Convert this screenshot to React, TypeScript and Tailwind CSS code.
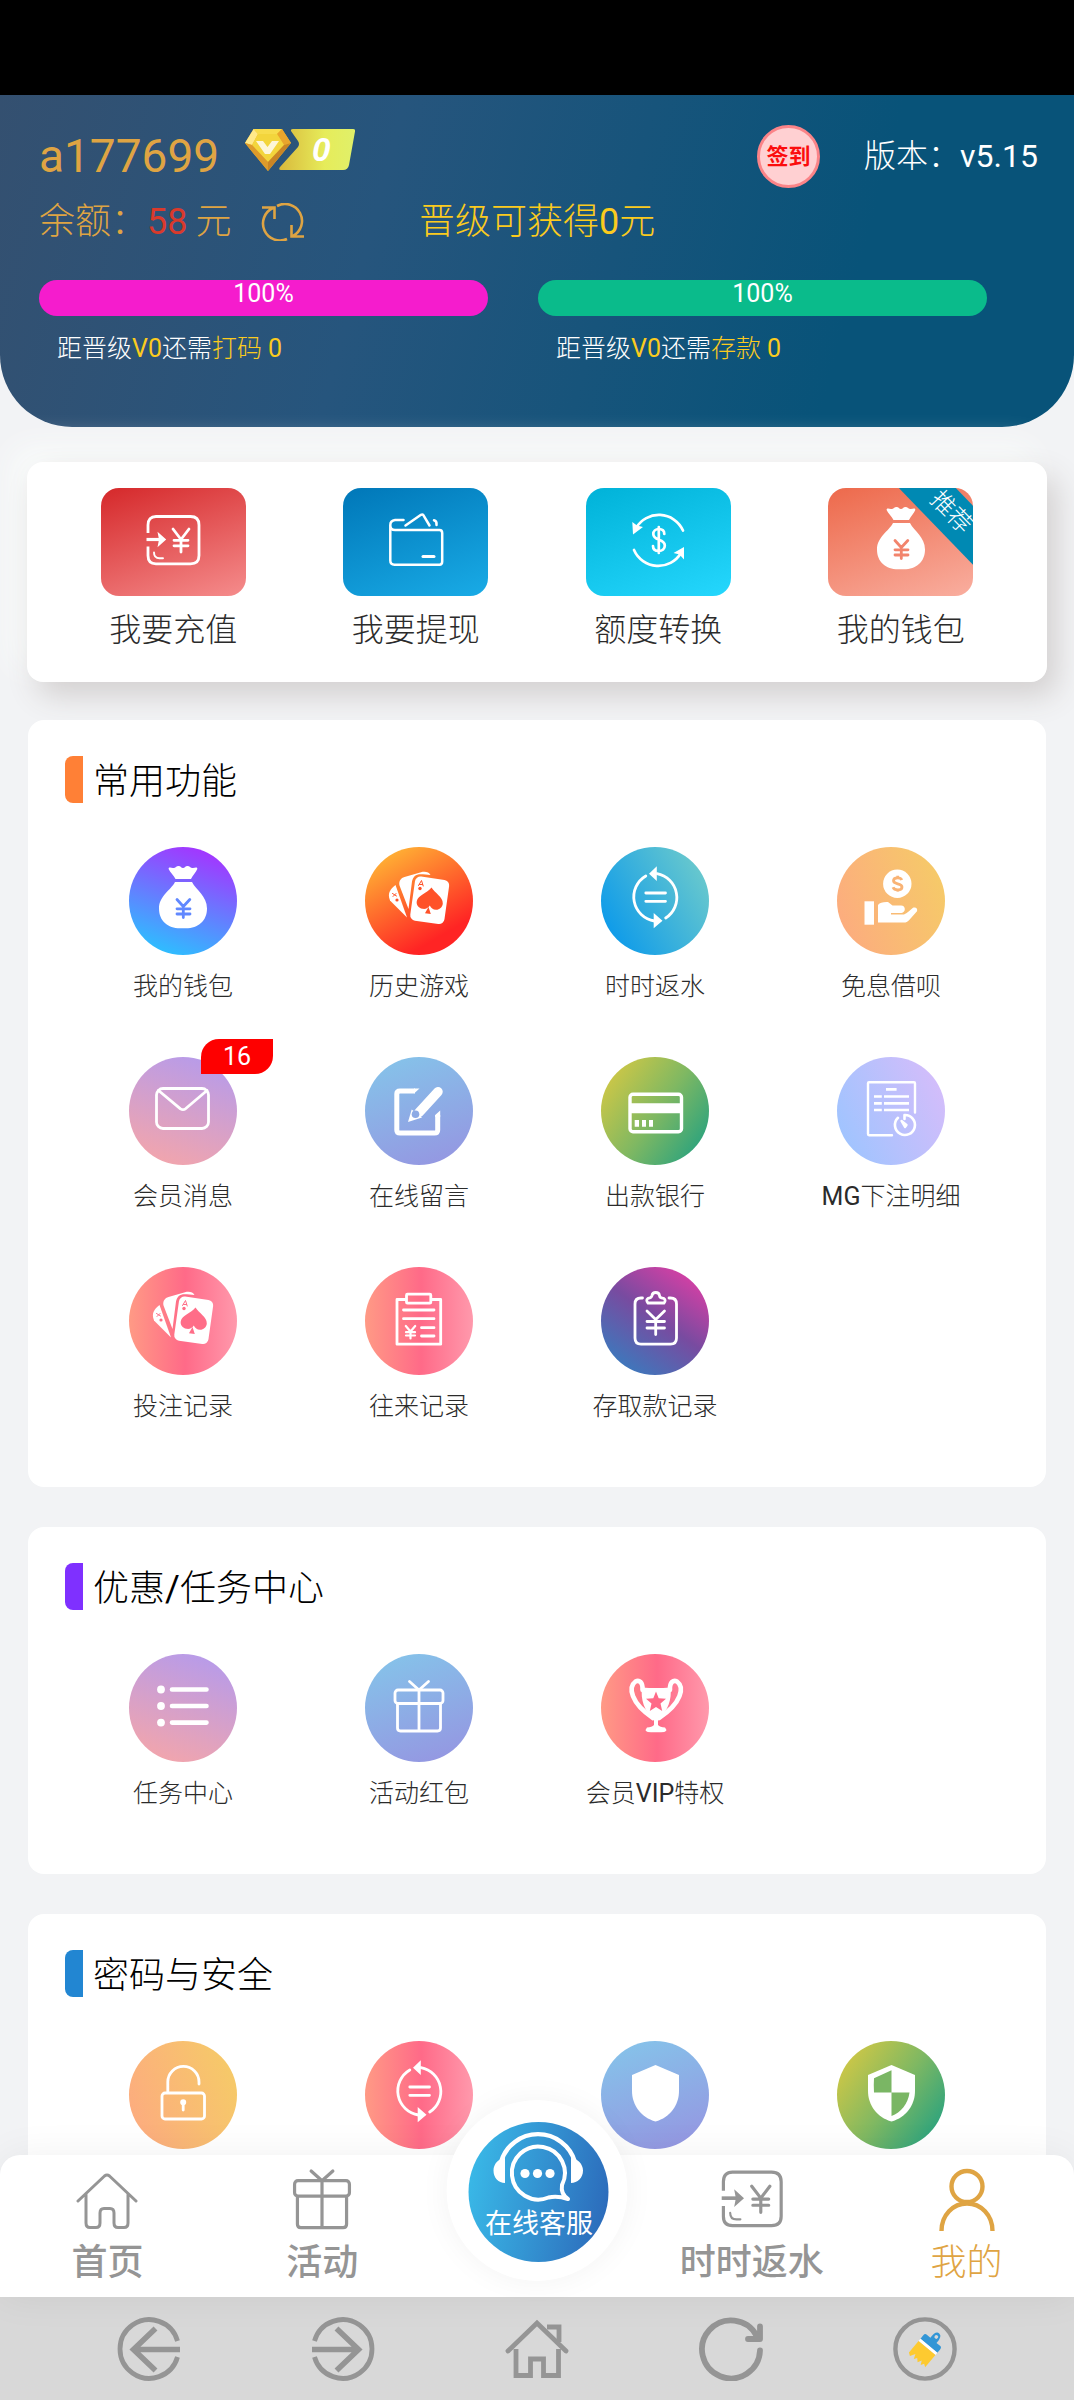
import type { ReactNode } from 'react';

const FONT = "font-['Roboto','Noto_Sans_CJK_SC',sans-serif]";

const PINK = 'bg-[linear-gradient(90deg,#ff9a85,#ff6a88_52%,#ff99ac)]';
const SKY = 'bg-[linear-gradient(160deg,#84c6ea,#9693e1)]';
const LILAC = 'bg-[linear-gradient(200deg,#b19af0,#f8a6a6)]';
const PEACH = 'bg-[linear-gradient(70deg,#fda981,#f5cd66)]';
const GREEN = 'bg-[linear-gradient(125deg,#e2cb3f,#7fb862_52%,#159d85)]';

/* Chinese is set light, latin letters and digits in regular */
function Mixed({ text }: { text: string }) {
  return (
    <>
      {text.split(/([A-Za-z0-9./]+)/).map((part, i) =>
        i % 2 ? (
          <span key={i} className="font-normal">
            {part}
          </span>
        ) : (
          part
        )
      )}
    </>
  );
}

function Glyph({ children, box = '0 0 108 108', className = 'size-[108px]', width = 2.8 }: { children: ReactNode; box?: string; className?: string; width?: number }) {
  return (
    <svg viewBox={box} className={className} fill="none" stroke="currentColor" strokeWidth={width} strokeLinecap="round" strokeLinejoin="round" aria-hidden="true">
      {children}
    </svg>
  );
}

function BagIcon({ ink }: { ink: string }) {
  return (
    <Glyph>
      <g fill="currentColor" stroke="none">
        <path d="M39.6 22C39.5 19.5 42 20.5 44 21C46.5 21.5 47 19 49.5 19C52 19 52 21 54 21C56 21 56 19 58.5 19C61 19 61.5 21.5 64 21C66 20.5 68.5 19.5 68.3 22C67 25.5 63.5 28.5 62 32H46.5C45 28.5 41 25.5 39.6 22Z" />
        <path d="M46 35H63C67 43 78 49 78 61.500C78 74 69 81.300 57 81.300H51C39 81.300 30 74 30 61.500C30 49 42 43 46 35Z" />
      </g>
      <path stroke={ink} d="M48 52.500L54.300 59.500L60.800 52.500M54.300 59.500V70.500M48 61.800H61M48 67H61" />
    </Glyph>
  );
}

function CardsIcon({ ink }: { ink: string }) {
  return (
    <Glyph>
      <g fill="currentColor" stroke="none">
        <path d="M30.500 38L42 70.500L25 53.500C22 46 25.500 42 30.500 38Z" />
        <path d="M34.500 38.500C33.500 34 36 31 39.500 30L56 25.300C60 24.300 64 25 65.500 28L58 27.300C51.500 26.500 48 29 47 34.500L43.500 62Z" />
        <rect x="47.500" y="31" width="34.500" height="44.500" rx="5.500" transform="rotate(8 64.500 53)" />
      </g>
      <g fill={ink} stroke="none">
        <path d="M66.500 40.500C70 46.500 78 49.500 77.800 56.500C77.500 60.500 74 63 71 62.800C68 62.600 66 61 64.800 58.500C63.200 61.200 60.500 62.300 57.500 61.800C53.500 61 51 58 51.800 54C53 48 62 46.500 66.500 40.500Z" />
        <path d="M63.500 60L65.800 67L60 66.200Z" />
        <circle cx="55" cy="41.500" r="1.700" />
        <circle cx="32" cy="53" r="1.600" />
      </g>
      <path stroke={ink} strokeWidth="1" d="M53.500 38.500L56.500 33.500L58.200 39M54.500 37.500H57.500M27.500 46.500L31.500 49M28 49.500L31 46.500" />
    </Glyph>
  );
}

function RefundIcon() {
  return (
    <Glyph>
      <path d="M44.800 29A24.300 24.300 0 0 0 53.500 74M64.700 71A24.300 24.300 0 0 0 56 26.700M44.800 46H64.500M44.800 54.300H64.500" />
      <path fill="currentColor" stroke="none" d="M55.800 19.300V34L48 26.700ZM52.700 66V81.300L61.500 73.700Z" />
    </Glyph>
  );
}

function LoanIcon() {
  return (
    <Glyph>
      <g fill="currentColor" stroke="none">
        <circle cx="60.300" cy="36.700" r="14.200" />
        <path d="M27.500 54.300H37V77.700H27.500Z" />
        <path d="M41 75.500V58C43 55.500 46 54.800 51 55L55.500 58.500H64C69 58.500 69 65.500 64.500 66H54V67.600H67C70 66.500 73.500 62.500 76 60.800C78.500 59.500 81 61.500 80 64.200L72 73.200C70.500 75 69 75.500 67 75.500Z" />
      </g>
      <path stroke="#f9b375" strokeWidth="2.800" strokeLinecap="butt" d="M64.800 33C64 31 62.500 30.800 60.500 30.800C58 30.800 56.500 32 56.500 33.800C56.500 37.800 65 35.800 65 40C65 42 63.500 43 60.800 43C58.500 43 56.800 42.300 56 40.300M60.700 28.800V31M60.700 42.500V44.800" />
    </Glyph>
  );
}

function MailIcon() {
  return (
    <Glyph>
      <rect x="27.500" y="31.500" width="52" height="40" rx="6.500" />
      <path d="M29.500 33.500L51.500 51.800Q54 53.500 56.500 51.800L78 33.500" />
    </Glyph>
  );
}

function EditIcon() {
  return (
    <Glyph>
      <path strokeWidth="5" strokeLinecap="butt" d="M50 34H35Q31.800 34 31.800 37V73Q31.800 76 35 76H69.500Q72.700 76 72.700 73V58" />
      <path fill="currentColor" stroke="none" d="M49 31.500H54.500L49 36.500ZM70.200 60V58L75.200 53.500V60Z" />
      <path strokeWidth="9.500" d="M54 55.500L73 34.800" />
      <path fill="currentColor" stroke="none" d="M43 65L46.700 52.500L57 60.500Z" />
      <circle cx="50.500" cy="57.200" r="3.800" fill="#8daae5" stroke="none" />
    </Glyph>
  );
}

function BankCardIcon() {
  return (
    <Glyph width={3.4}>
      <rect x="29" y="37.200" width="51.500" height="37.600" rx="3" />
      <path fill="currentColor" stroke="none" d="M29 46.300H80V56.300H29ZM33.700 63H38V69.700H33.700ZM41 63H45V69.700H41ZM48 63H52V69.700H48Z" />
    </Glyph>
  );
}

function BetDetailIcon() {
  return (
    <Glyph width={2.4}>
      <path d="M78 55.500V26.300Q78 25.300 77 25.300H32Q31 25.300 31 26.300V77Q31 78.200 32 78.200H55" />
      <g strokeWidth="2.700" strokeLinecap="butt">
        <path d="M49 32.300H59.600M37 39.500H44.800M47 39.500H72M37 46.300H44.800M47 46.300H72M37 53H44.800M47 53H72" />
      </g>
      <path strokeWidth="2.600" d="M67.500 58A10 10 0 1 1 61 60.800M67.500 58V62" />
      <path fill="currentColor" d="M64.500 64L69.500 68L68 70Z" />
    </Glyph>
  );
}

function StatementIcon() {
  return (
    <Glyph>
      <path d="M40 32.500H32V77.200H75.700V32.500H67" />
      <rect x="41.500" y="27.200" width="24.300" height="9" rx="1" />
      <path d="M38.500 43H69M38.500 51.700H69M56.500 60.700H69M56.500 69H69" />
      <path strokeWidth="2.200" d="M40.800 59L45.500 64.500L50.200 59M45.500 64.500V71.500M41 65.200H50M41 68.500H50" />
    </Glyph>
  );
}

function CashRecordIcon() {
  return (
    <Glyph>
      <path d="M41.500 31H40Q34 31 34 37V71Q34 77.200 40 77.200H69.500Q75.500 77.200 75.500 71V37Q75.500 31 69.500 31H68" />
      <path d="M47 36H63Q65.500 33 62.500 31.300Q58.500 31 58.500 28.500Q58 25.500 54.700 25.500Q51.500 25.500 51 28.500Q50.500 31 47 31.300Q44.500 33 47 36Z" />
      <path d="M46 44L54.700 52.500L63.500 44M54.700 52.500V67.500M46 54.500H63.500M46 61H63.500" />
    </Glyph>
  );
}

function ListIcon() {
  return (
    <Glyph width={4.6}>
      <path d="M43 35.500H77.500M43 52H77.500M43 68.600H77.500" />
      <g fill="currentColor" stroke="none">
        <circle cx="32" cy="35.500" r="3.900" />
        <circle cx="32" cy="52" r="3.900" />
        <circle cx="32" cy="68.600" r="3.900" />
      </g>
    </Glyph>
  );
}

function GiftIcon({ box, className }: { box?: string; className?: string }) {
  return (
    <Glyph box={box} className={className}>
      <rect x="30" y="36" width="48" height="13.500" rx="3" />
      <path d="M32.500 50V74Q32.500 77 35.500 77H72.500Q75.500 77 75.500 74V50M54 36V77M44.500 27.500L54 36L63.500 27.500" />
    </Glyph>
  );
}

function TrophyIcon() {
  return (
    <Glyph>
      <path fill="currentColor" stroke="none" d="M41 33.500Q55 34.500 69.500 33.500C71 45 67 57 57 65.500V71Q59 73 64 73.500Q68 78.300 60 78.300H50Q42 78.300 46 73.500Q51 73 53 71V65.500C43 57 39.500 45 41 33.500Z" />
      <path strokeWidth="4.600" d="M41.500 36C42 28 38 25.500 34.500 27.500C27 33 29.500 49 52 64M69 36C68.500 28 72.500 25.500 76 27.500C83.500 33 81 49 58 64" />
      <path fill="#ff6a88" stroke="none" d="M55 37.500L57.700 44.300L65 44.800L59.500 49.500L61.200 57L55 53L48.800 57L50.500 49.500L45 44.800L52.300 44.300Z" />
    </Glyph>
  );
}

function LockIcon() {
  return (
    <Glyph>
      <rect x="33" y="52" width="42.500" height="26" rx="3" />
      <path d="M38.800 51V41A15.600 15.600 0 0 1 70 41V43" />
      <circle cx="54.200" cy="61.300" r="1.600" />
      <path d="M54.200 62V69" />
    </Glyph>
  );
}

function ShieldIcon({ ink }: { ink?: string }) {
  return (
    <Glyph>
      <path fill="currentColor" stroke="none" d="M54.500 24L78 34V50C78 64 69 76.500 54.500 80.500C40 76.500 31 64 31 50V34Z" />
      {ink && <path fill={ink} stroke="none" d="M54.500 29.300V51.500H37Q36.500 44 37 37.200ZM54.500 51.500H72.500C71 63 64 71.500 54.500 75Z" />}
    </Glyph>
  );
}

function DepositIcon({ box = '18.5 0 108 108', className }: { box?: string; className?: string }) {
  return (
    <Glyph box={box} className={className}>
      <path strokeLinecap="butt" d="M47.500 45V37Q47.500 28.500 55.500 28.500H90Q98.500 28.500 98.500 37V67.500Q98.500 75.800 90 75.800H55.500Q47.500 75.800 47.500 67.500V58.500" />
      <path strokeLinecap="butt" strokeWidth="3.200" d="M46 51.500H60" />
      <path fill="currentColor" stroke="none" d="M57 43.700L65.700 51.500L57 59.300L58.500 51.500Z" />
      <path strokeWidth="1.900" d="M53.500 64.500Q53.500 70.200 59 70.200H62.500" />
      <path d="M72.500 41L80.500 51.500L88.500 41M80.500 51.500V64M73.500 52.300H87.500M73.500 57.800H87.500" />
    </Glyph>
  );
}

function WithdrawIcon() {
  return (
    <Glyph box="18.5 0 108 108" width={2.5}>
      <path d="M60 32H51.500Q46.800 32.500 46.800 37.200Q46.800 42 51.500 42H96Q98.700 42 98.700 45V73.500Q98.700 76.700 96 76.700H51Q46.800 76.700 46.800 72.500V37" />
      <path d="M62 37.500L77.500 26.800Q79 26 80 27.300L86 37.500M90.500 32.300Q93.500 33 93 37" />
      <path strokeWidth="3" d="M79.500 68.400H90.500" />
    </Glyph>
  );
}

function ConvertIcon() {
  return (
    <Glyph box="18.5 0 108 108" width={2.7}>
      <path d="M97.500 42.500A26.500 26.500 0 0 0 50.500 40M48.500 62A26.500 26.500 0 0 0 95.500 65" />
      <path fill="currentColor" stroke="none" d="M46.800 34L51.500 37.500L57.500 39L47.500 46.500ZM98.500 59L88 65L94 66.500L98.500 71.500Z" />
      <path d="M73.300 39V65M78.800 46C78.800 42.500 76.500 41 73.300 41C70 41 67.800 43 67.800 46C67.800 53.500 79.300 50 79.300 57.500C79.300 61 76.800 63 73.300 63C69.500 63 67.500 61 67.500 58" />
    </Glyph>
  );
}

function HeadsetIcon() {
  return (
    <Glyph box="0 0 140 84" className="h-[84px] w-[140px]" width={4}>
      <path strokeWidth="4.400" d="M32.500 40A38.500 38.500 0 0 1 106.500 40" />
      <path fill="currentColor" stroke="none" d="M36.500 36V61C30 61 25 56 25 48.500C25 42 30 36.500 36.500 36ZM102.500 36V61C109 61 114.500 56 114.500 48.500C114.500 42 109 36.500 102.500 36Z" />
      <path d="M93.500 63A26.500 26.500 0 1 0 80 75.500Q89 73.500 99.500 77Q92 72 93.500 63Z" />
      <g fill="currentColor" stroke="none">
        <circle cx="56.500" cy="51.500" r="4.600" />
        <circle cx="69" cy="51.500" r="4.600" />
        <circle cx="81.500" cy="51.500" r="4.600" />
      </g>
    </Glyph>
  );
}

function LevelBadge() {
  return (
    <svg viewBox="0 0 110 42" className="mb-3 ml-[26px] h-[42px] w-[110px]" role="img" aria-label="V0">
      <defs>
        <linearGradient id="flag" x1="0" x2="1">
          <stop offset="0" stopColor="#d9b93c" />
          <stop offset="0.6" stopColor="#e6ec5a" />
          <stop offset="1" stopColor="#e0f06a" />
        </linearGradient>
      </defs>
      <path d="M8.600 0H37L46 14L23 42L0 14Z" fill="#f0b92f" />
      <path d="M8.600 0L0 14L7 16L13 5Z" fill="#ffe98a" />
      <path d="M8.600 0H37L32 5H13Z" fill="#f7dc4c" />
      <path d="M37 0L46 14L39 16L32 5Z" fill="#e9a52c" />
      <path d="M13 5H32L39 16L23 33L7 16Z" fill="#f3d53c" />
      <path d="M0 14L7 16L23 33V42Z" fill="#dd9a2b" />
      <path d="M46 14L39 16L23 33V42Z" fill="#c98525" />
      <path d="M11 12H18L22.500 18L27 12H34L25 25H20Z" fill="#fdf6d8" />
      <path d="M48 0H108Q110.500 0 110 2.500L104 36Q103 41 98 41H36Q33 41 35 38L53 18Q55 15 53 12L46 2Q45.500 0 48 0Z" fill="url(#flag)" />
      <text x="67" y="32" fill="#fff" fontSize="33" fontWeight="700" fontStyle="italic" fontFamily="Liberation Sans, sans-serif">
        0
      </text>
    </svg>
  );
}

type Item = { label: string; bg: string; icon: ReactNode; badge?: number; hideLabel?: boolean };

const quick: { label: string; bg: string; icon: ReactNode; hot?: boolean }[] = [
  { label: '我要充值', bg: 'bg-[linear-gradient(160deg,#d5282a,#f58c8c)]', icon: <DepositIcon /> },
  { label: '我要提现', bg: 'bg-[linear-gradient(160deg,#0077b8,#19abe6)]', icon: <WithdrawIcon /> },
  { label: '额度转换', bg: 'bg-[linear-gradient(160deg,#00b2d8,#25d7fd)]', icon: <ConvertIcon /> },
  { label: '我的钱包', bg: 'bg-[linear-gradient(160deg,#ed694b,#f9ae9f)]', icon: <BagIcon ink="#f2846c" />, hot: true },
];

const common: Item[] = [
  { label: '我的钱包', bg: 'bg-[linear-gradient(200deg,#b224ff,#1fcfff)]', icon: <BagIcon ink="#6188ff" /> },
  { label: '历史游戏', bg: 'bg-[linear-gradient(150deg,#ffc837,#ff2424_78%)]', icon: <CardsIcon ink="#ff5228" /> },
  { label: '时时返水', bg: 'bg-[linear-gradient(60deg,#0094ee,#76cfc9)]', icon: <RefundIcon /> },
  { label: '免息借呗', bg: PEACH, icon: <LoanIcon /> },
  { label: '会员消息', bg: LILAC, icon: <MailIcon />, badge: 16 },
  { label: '在线留言', bg: SKY, icon: <EditIcon /> },
  { label: '出款银行', bg: GREEN, icon: <BankCardIcon /> },
  { label: 'MG下注明细', bg: 'bg-[linear-gradient(65deg,#99c5ff,#dabcfa)]', icon: <BetDetailIcon /> },
  { label: '投注记录', bg: PINK, icon: <CardsIcon ink="#ff6d88" /> },
  { label: '往来记录', bg: PINK, icon: <StatementIcon /> },
  { label: '存取款记录', bg: 'bg-[linear-gradient(35deg,#2b86c5,#784ba0_52%,#f23ca6)]', icon: <CashRecordIcon /> },
];

const promos: Item[] = [
  { label: '任务中心', bg: LILAC, icon: <ListIcon /> },
  { label: '活动红包', bg: SKY, icon: <GiftIcon /> },
  { label: '会员VIP特权', bg: PINK, icon: <TrophyIcon /> },
];

const security: Item[] = [
  { label: '登录密码', bg: PEACH, icon: <LockIcon />, hideLabel: true },
  { label: '取款密码', bg: PINK, icon: <RefundIcon />, hideLabel: true },
  { label: '安全中心', bg: SKY, icon: <ShieldIcon />, hideLabel: true },
  { label: '账号保护', bg: GREEN, icon: <ShieldIcon ink="#7ab664" />, hideLabel: true },
];

function Progress({ color, action }: { color: string; action: string }) {
  return (
    <div>
      <div className={`h-9 rounded-full text-center text-[25px] leading-[28px] font-normal ${color}`}>100%</div>
      <p className="mt-3 pl-[18px] text-[25px] leading-[42px]">
        距晋级<span className="font-normal text-[#fbcb1e]">V0</span>还需
        <span className="text-[#fbcb1e]">
          <Mixed text={`${action} 0`} />
        </span>
      </p>
    </div>
  );
}

function Header() {
  return (
    <header className="rounded-b-[72px] bg-[linear-gradient(105deg,#345070,#26557d_35%,#085379_78%)] pt-[30px] pr-9 pb-[57px] pl-[39px] text-white">
      <div className="flex h-[62px] items-center">
        <h1 className="text-[46px] leading-[58px] font-normal text-[#dfa443]">a177699</h1>
        <LevelBadge />
        <button className="ml-auto size-[63px] rounded-full border-[3px] border-[#fb8488] bg-[#ffd0d2] text-[22px] font-bold text-[#fb0d0d]">签到</button>
        <p className="ml-11 text-[32px]">
          <Mixed text="版本：v5.15" />
        </p>
      </div>
      <div className="mt-[7px] flex h-14 items-center text-[36px] text-[#dfa443]">
        <p className="flex w-[222px] shrink-0 gap-2 whitespace-nowrap">
          <span>
            余额：<span className="font-normal text-[#d93a2c]">58</span>
          </span>
          <span>元</span>
        </p>
        <button aria-label="刷新余额" className="w-[158px] shrink-0">
          <svg viewBox="0 0 44 38" className="h-[38px] w-11" fill="none" stroke="currentColor" strokeWidth="2.6" aria-hidden="true">
            <path d="M1 4.500H13.500V16M12 5A17 17 0 0 0 26 36M43 33.500H30.500V22M32 33A17 17 0 0 0 16 3" />
          </svg>
        </button>
        <p className="text-[#fbcb1e]">
          <Mixed text="晋级可获得0元" />
        </p>
      </div>
      <div className="mt-[30px] mr-[51px] grid grid-cols-2 gap-[50px]">
        <Progress color="bg-[#f51ccd]" action="打码" />
        <Progress color="bg-[#0abb8b]" action="存款" />
      </div>
    </header>
  );
}

function QuickActions() {
  return (
    <div className="mx-[27px] mt-[35px] grid grid-cols-4 rounded-2xl bg-white px-[25px] pt-[26px] pb-7 shadow-[10px_14px_30px_#d3d0d0,-14px_-14px_30px_#fafcfb]">
      {quick.map((q) => (
        <button key={q.label} className="flex flex-col items-center">
          <span className={`relative flex h-[108px] w-[145px] justify-center overflow-hidden rounded-[18px] text-white ${q.bg}`}>
            {q.icon}
            {q.hot && <span className="absolute top-1 left-[53px] w-[140px] rotate-[46deg] bg-[#0089b3] text-center text-2xl leading-[41px]">推荐</span>}
          </span>
          <span className="mt-[10px] text-[32px] leading-[48px]">{q.label}</span>
        </button>
      ))}
    </div>
  );
}

function Section({ title, bar, items }: { title: string; bar: string; items: Item[] }) {
  return (
    <section className="mx-7 rounded-2xl bg-white px-[37px] pt-9 pb-[10px]">
      <div className="flex h-[47px] gap-[10px]">
        <span className={`h-full w-[18px] rounded-l-[8px] ${bar}`} />
        <h2 className="text-[36px] leading-[52px] text-black">
          <Mixed text={title} />
        </h2>
      </div>
      <div className="mt-11 grid grid-cols-4">
        {items.map((item) => (
          <button key={item.label} aria-label={item.label} className="flex h-[210px] flex-col items-center">
            <span className={`relative size-[108px] rounded-full text-white ${item.bg}`}>
              {item.icon}
              {item.badge && (
                <span className="absolute -top-[18px] left-[72px] w-[72px] rounded-tl-[18px] rounded-br-[18px] bg-[#fe0000] text-[25px] leading-[35px] font-normal">{item.badge}</span>
              )}
            </span>
            {!item.hideLabel && (
              <span className="mt-4 text-[25px] leading-8 whitespace-nowrap">
                <Mixed text={item.label} />
              </span>
            )}
          </button>
        ))}
      </div>
    </section>
  );
}

function TabBar() {
  const tab = 'flex flex-1 flex-col items-center pt-3 text-[36px] leading-[46px] font-medium text-[#959595]';
  return (
    <nav className="relative -mt-5 flex h-[142px] shrink-0 rounded-t-[20px] bg-white shadow-[0_0_40px_rgba(0,0,0,0.06)]">
      <a href="#home" className={tab}>
        <Glyph box="0 0 62 60" className="mt-1 h-[60px] w-[62px]" width={3}>
          <path d="M2 30L28.500 5Q31 3 33.500 5L60 30M10 23V52Q10 56.500 14 56.500H20Q24 56.500 24 52V42Q24 37.500 28 37.500H34Q38 37.500 38 42V52Q38 56.500 42 56.500H48Q52 56.500 52 52V23" />
        </Glyph>
        <span className="mt-[9px]">首页</span>
      </a>
      <a href="#promo" className={tab}>
        <GiftIcon box="26 24 56 56" className="size-16" />
        <span className="mt-[9px]">活动</span>
      </a>
      <div className="relative flex-1">
        <a href="#service" className="absolute -top-[55px] left-1/2 flex size-[181px] -translate-x-1/2 items-center justify-center rounded-full bg-white pt-[3px] pl-[4px] shadow-[0_0_30px_rgba(0,0,0,0.05)]">
          <span className="flex size-[140px] flex-col items-center rounded-full bg-[linear-gradient(100deg,#3abdea,#3497d4_45%,#2b66b8)] text-white">
            <HeadsetIcon />
            <span className="text-[27px] leading-9 font-normal">在线客服</span>
          </span>
        </a>
      </div>
      <a href="#refund" className={tab}>
        <DepositIcon box="44.5 24 56.5 56.5" className="size-16" />
        <span className="mt-[9px]">时时返水</span>
      </a>
      <a href="#mine" className="flex flex-1 flex-col items-center pt-3 text-[36px] leading-[46px] text-[#dfa443]">
        <Glyph box="0 0 64 64" className="size-16" width={4.4}>
          <circle cx="32" cy="19.500" r="15.500" />
          <path strokeLinecap="butt" d="M6.500 64C6.500 48 18 36.500 32 36.500C46 36.500 57.500 48 57.500 64" />
        </Glyph>
        <span className="mt-[9px]">我的</span>
      </a>
    </nav>
  );
}

function BrowserBar() {
  const size = 'size-16';
  return (
    <div className="grid h-[103px] shrink-0 grid-cols-5 items-center justify-items-center bg-[#d8d8d8] px-[52px] text-[#959595]">
      <button aria-label="后退">
        <Glyph box="0 0 64 64" className={size} width={4.8}>
          <g strokeLinecap="butt" strokeLinejoin="miter">
            <path d="M60.500 24A29.300 29.300 0 1 0 60.500 40" />
            <path strokeWidth="5.600" d="M63 32.500H17M38.500 11.500L16.500 32.500L38.500 53.500" />
          </g>
        </Glyph>
      </button>
      <button aria-label="前进">
        <Glyph box="0 0 64 64" className={size} width={4.8}>
          <g strokeLinecap="butt" strokeLinejoin="miter">
            <path d="M3.500 24A29.300 29.300 0 1 1 3.500 40" />
            <path strokeWidth="5.600" d="M1 32.500H47M25.500 11.500L47.500 32.500L25.500 53.500" />
          </g>
        </Glyph>
      </button>
      <button aria-label="主页">
        <Glyph box="0 0 64 64" className={size} width={4.8}>
          <g strokeLinecap="butt" strokeLinejoin="miter">
            <path strokeLinecap="round" d="M3 34L32 6L61 34" />
            <path d="M42 10H54V25M11 32V58.500H25.500V42H38.500V58.500H53.500V32" />
          </g>
        </Glyph>
      </button>
      <button aria-label="刷新">
        <Glyph box="0 0 64 64" className={size} width={5.8}>
          <path d="M61 33.500A29 29 0 1 1 57.500 18.500M61 9.500V22H49" />
        </Glyph>
      </button>
      <button aria-label="主题">
        <Glyph box="0 0 64 64" className={size} width={4.4}>
          <circle cx="32" cy="32" r="29.600" />
          <g transform="rotate(40 34 31)" stroke="none">
            <path fill="#3296d6" d="M30 21Q29.500 12 34 12Q38.500 12 38 21H43Q45 21 45 24V28H23V24Q23 21 25 21Z" />
            <circle cx="34" cy="16.500" r="1.900" fill="#d8d8d8" />
            <path fill="#fff" d="M23 28H45V31H23Z" />
            <path fill="#fdca30" d="M23 31H45V47L42 45L40 48L38 44L36 48L33 45L31 48L29 43L26 48L23 46Z" />
          </g>
        </Glyph>
      </button>
    </div>
  );
}

export default function App() {
  return (
    <div className={`flex h-screen flex-col overflow-hidden bg-[#f2f3f5] font-light text-[#2b2b2b] ${FONT}`}>
      <div className="h-[95px] shrink-0 bg-black" />
      <main className="min-h-0 flex-1 overflow-y-auto [scrollbar-width:none]">
        <Header />
        <QuickActions />
        <div className="mt-[38px] flex flex-col gap-10">
          <Section title="常用功能" bar="bg-[#ff8036]" items={common} />
          <Section title="优惠/任务中心" bar="bg-[#7f30ff]" items={promos} />
          <Section title="密码与安全" bar="bg-[#2286d2]" items={security} />
        </div>
      </main>
      <TabBar />
      <BrowserBar />
    </div>
  );
}
